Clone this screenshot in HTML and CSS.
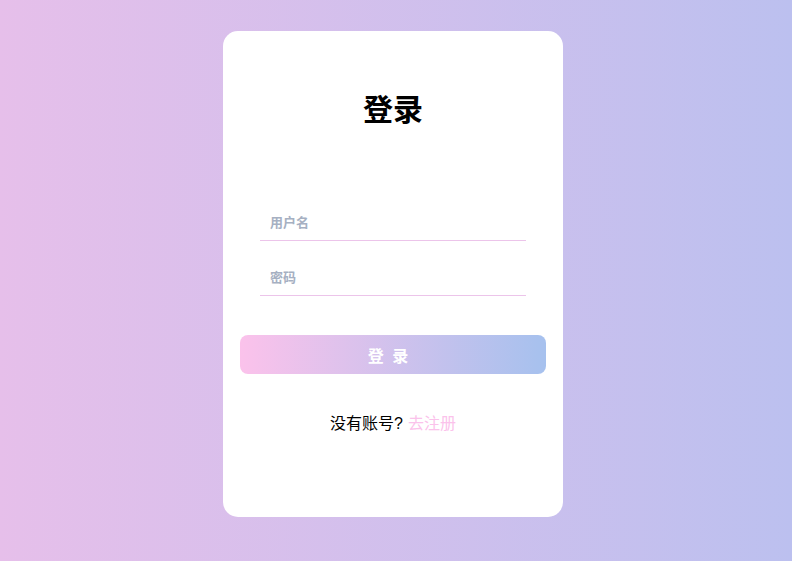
FILE: index.html
```html
<!DOCTYPE html>
<html lang="zh">
<head>
<meta charset="utf-8">
<title>登录</title>
<link rel="stylesheet" href="styles.css">
</head>
<body>
<div class="page">
  <div class="card">
    <h1 class="title">登录</h1>
    <div class="fields">
      <input class="field" type="text" placeholder="用户名">
      <input class="field" type="password" placeholder="密码">
    </div>
    <button class="btn">登 录</button>
    <p class="foot">没有账号?<a class="link" href="#">去注册</a></p>
  </div>
</div>
</body>
</html>
```
FILE: styles.css
```css
html, body {
  margin: 0;
  padding: 0;
  height: 100%;
}
body {
  font-family: "Liberation Sans", "Noto Sans CJK SC", sans-serif;
}
.page {
  height: 561px;
  background: linear-gradient(to right, #e6bfea, #bcc0ef);
  display: flex;
  justify-content: center;
  padding: 31px 6px 0 0;
  box-sizing: border-box;
}
.card {
  width: 340px;
  height: 486px;
  background: #fff;
  border-radius: 15px;
  box-sizing: border-box;
  padding: 0 17px;
  display: flex;
  flex-direction: column;
  align-items: center;
}
.title {
  margin: 60px 0 0;
  font-size: 30px;
  line-height: 38px;
  font-weight: bold;
  color: #000;
}
.fields {
  margin-top: 75px;
  display: flex;
  flex-direction: column;
  gap: 18px;
  width: 266px;
}
.field {
  display: block;
  width: 100%;
  height: 37px;
  box-sizing: border-box;
  border: none;
  border-bottom: 1px solid #ecc4ea;
  outline: none;
  padding: 0 10px;
  font-family: inherit;
  font-size: 13px;
  font-weight: bold;
  color: #333;
  background: transparent;
}
.field::placeholder {
  color: #a6b0c2;
  font-weight: bold;
}
.btn {
  margin-top: 39px;
  width: 306px;
  height: 39px;
  border: none;
  border-radius: 8px;
  background: linear-gradient(to right, #fbc2eb, #a6c1ee);
  color: #fff;
  font-family: inherit;
  font-size: 16px;
  font-weight: bold;
  letter-spacing: 2px;
  padding: 0 8px 0 0;
  cursor: pointer;
}
.foot {
  margin: 40px 0 0;
  font-size: 16px;
  line-height: 20px;
  color: #000;
}
.link {
  margin-left: 5px;
  color: #fbc2eb;
  text-decoration: none;
}
```
